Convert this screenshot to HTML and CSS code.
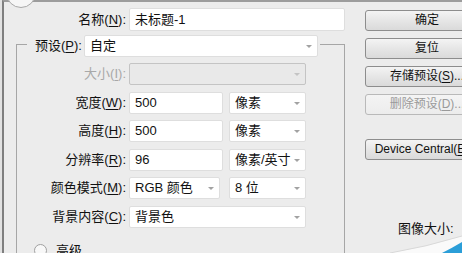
FILE: index.html
```html
<!DOCTYPE html>
<html lang="zh-CN">
<head>
<meta charset="utf-8">
<title>新建</title>
<link rel="stylesheet" href="styles.css">
</head>
<body>
<div class="dialog">
  <div class="titlecap"></div>
  <div class="form">
    <div class="row name-row">
      <span class="lbl name-lbl">名称(<u>N</u>):</span>
      <div class="field input name-input">未标题-1</div>
    </div>
    <fieldset class="group">
      <legend class="preset">
        <span class="lbl preset-lbl">预设(<u>P</u>):</span>
        <div class="field select preset-select">自定<span class="arrow"></span></div>
      </legend>
      <div class="rows">
        <div class="row disabled">
          <span class="lbl">大小(<u>I</u>):</span>
          <div class="field select w-full is-disabled"><span class="arrow"></span></div>
        </div>
        <div class="row">
          <span class="lbl">宽度(<u>W</u>):</span>
          <div class="field input w-num">500</div>
          <div class="field select w-unit">像素<span class="arrow"></span></div>
        </div>
        <div class="row">
          <span class="lbl">高度(<u>H</u>):</span>
          <div class="field input w-num">500</div>
          <div class="field select w-unit">像素<span class="arrow"></span></div>
        </div>
        <div class="row">
          <span class="lbl">分辨率(<u>R</u>):</span>
          <div class="field input w-num">96</div>
          <div class="field select w-unit">像素/英寸<span class="arrow"></span></div>
        </div>
        <div class="row">
          <span class="lbl">颜色模式(<u>M</u>):</span>
          <div class="field select w-mode">RGB 颜色<span class="arrow"></span></div>
          <div class="field select w-unit gap-wide">8 位<span class="arrow"></span></div>
        </div>
        <div class="row">
          <span class="lbl">背景内容(<u>C</u>):</span>
          <div class="field select w-full">背景色<span class="arrow"></span></div>
        </div>
        <div class="advanced">
          <span class="toggle"></span>
          <span class="adv-text">高级</span>
        </div>
      </div>
    </fieldset>
  </div>
  <div class="side">
    <div class="btn">确定</div>
    <div class="btn">复位</div>
    <div class="btn">存储预设(<u>S</u>)...</div>
    <div class="btn is-disabled">删除预设(<u>D</u>)...</div>
    <div class="btn btn-device">Device Central(<u>E</u>)...</div>
    <div class="size-label">图像大小:</div>
  </div>
  <svg class="corner" width="72" height="18" viewBox="0 0 72 18" aria-hidden="true">
    <path d="M0 18 Q36 12 72 1 L72 18 Z" fill="#fafafa"/>
    <path d="M0 18 Q36 12 72 1" fill="none" stroke="#d8d8d8" stroke-width="1"/>
    <path d="M52 18 Q62 13 72 7 L72 18 Z" fill="#2b9ed8"/>
  </svg>
</div>
</body>
</html>
```

FILE: styles.css
```css
html, body {
  margin: 0;
  padding: 0;
}

body {
  width: 462px;
  height: 253px;
  overflow: hidden;
  background: #e2e2e2;
  font-family: "Liberation Sans", "Noto Sans CJK SC", sans-serif;
  font-size: 13px;
  color: #111;
}

u {
  text-decoration: underline;
  text-underline-offset: 2px;
}

.dialog {
  position: relative;
  box-sizing: border-box;
  height: 253px;
  margin-left: 2px;
  border-left: 2px solid #7f7f7f;
  border-top: 2px solid #9c9c9c;
  background: #ececec;
  display: flex;
}

.titlecap {
  position: absolute;
  left: 2px;
  top: -24px;
  width: 28px;
  height: 28px;
  border-radius: 50%;
  background: #f6f6f6;
  border: 1px solid #a8a8a8;
}

.form {
  width: 341px;
  flex: none;
  padding-top: 6px;
}

.row {
  display: flex;
  align-items: center;
  height: 22px;
}

.lbl {
  flex: none;
  width: 109px;
  text-align: right;
  white-space: nowrap;
  line-height: 22px;
  margin-right: 3px;
}

.name-row {
  height: 23px;
}

.name-lbl {
  width: 122px;
}

.field {
  position: relative;
  box-sizing: border-box;
  height: 22px;
  line-height: 20px;
  padding-left: 5px;
  background: #fff;
  border: 1px solid #dedede;
  border-radius: 2px;
  white-space: nowrap;
}

.name-input {
  width: 217px;
  height: 23px;
  line-height: 21px;
}

.arrow {
  position: absolute;
  right: 5px;
  top: 9px;
  width: 0;
  height: 0;
  border-left: 3px solid transparent;
  border-right: 3px solid transparent;
  border-top: 3px solid #a2a2a2;
}

.group {
  box-sizing: border-box;
  width: 329px;
  height: 222px;
  margin: 0 0 0 12px;
  padding: 0;
  border: 1px solid #a6a6a6;
  border-bottom: none;
  min-width: 0;
}

.preset {
  display: flex;
  align-items: center;
  margin-left: 10px;
  padding: 4px 2px 0 8px;
}

.preset-lbl {
  width: 46px;
  text-align: left;
  margin-right: 3px;
}

.preset-select {
  width: 234px;
}

.rows {
  display: flex;
  flex-direction: column;
  gap: 6.6px;
  padding-top: 6px;
}

.w-full {
  width: 177px;
}

.w-num {
  width: 94px;
}

.w-unit {
  width: 77px;
  margin-left: 6px;
}

.w-mode {
  width: 91px;
}

.gap-wide {
  margin-left: 9px;
}

.disabled .lbl {
  color: #a8a8a8;
}

.is-disabled.field {
  background: #e9e9e9;
  border-color: #c4c4c4;
}

.is-disabled .arrow {
  border-top-color: #c4c4c4;
}

.advanced {
  display: flex;
  align-items: center;
  gap: 9px;
  margin-top: 8px;
  padding-left: 17px;
  height: 16px;
}

.toggle {
  box-sizing: border-box;
  width: 13px;
  height: 13px;
  border-radius: 50%;
  border: 1px solid #a0a0a0;
  background: #f8f8f8;
}

.adv-text {
  line-height: 16px;
}

.side {
  flex: none;
  margin-left: 20px;
  padding-top: 8px;
  display: flex;
  flex-direction: column;
  gap: 7px;
}

.btn {
  box-sizing: border-box;
  width: 124px;
  height: 21px;
  line-height: 19px;
  font-size: 12px;
  text-align: center;
  white-space: nowrap;
  border: 1px solid #8d8d8d;
  border-radius: 3px;
  background: linear-gradient(#f4f4f4, #e6e6e6 50%, #dadada);
  color: #111;
}

.btn.is-disabled {
  color: #9a9a9a;
  border-color: #b9b9b9;
  background: linear-gradient(#f4f4f4, #ececec);
}

.btn-device {
  margin-top: 17px;
}

.size-label {
  margin-top: 53px;
  padding-left: 33px;
  line-height: 18px;
  white-space: nowrap;
}

.corner {
  position: absolute;
  right: 0;
  bottom: 0;
}
```
